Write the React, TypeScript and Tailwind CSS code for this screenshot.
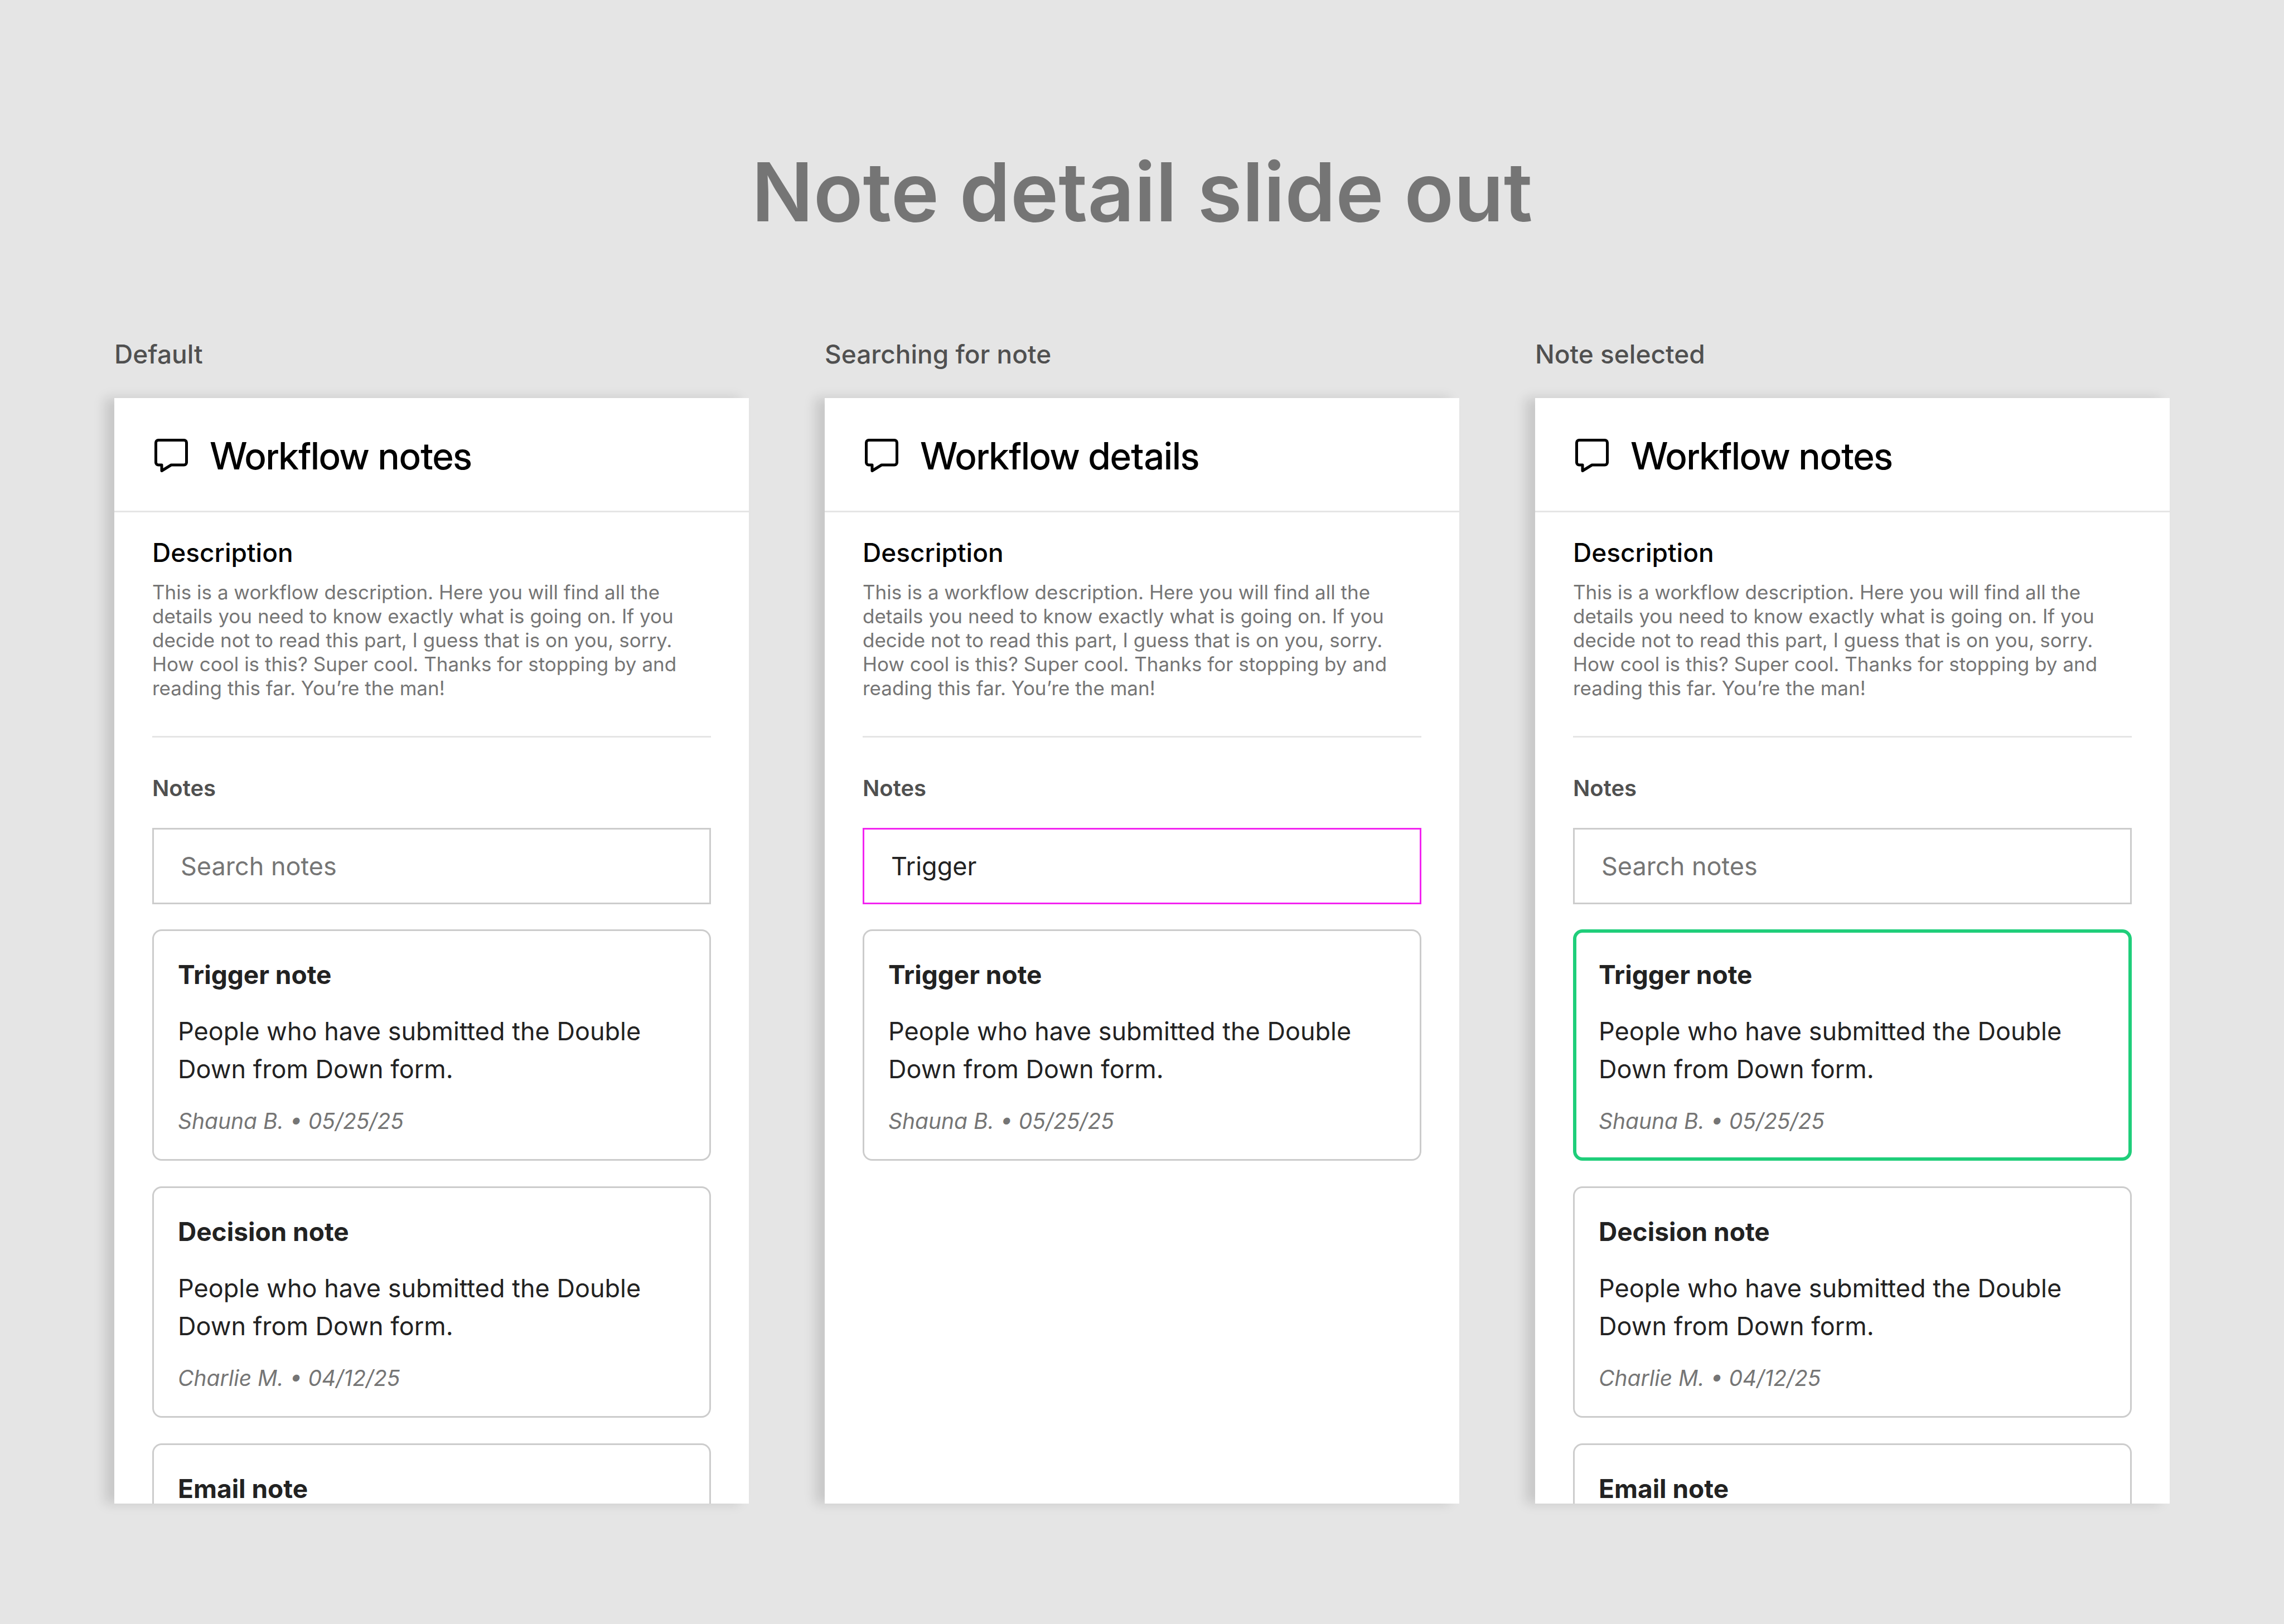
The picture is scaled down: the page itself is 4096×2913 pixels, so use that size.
import React, { useState } from 'react';

type Note = {
  title: string;
  body?: string;
  author?: string;
  date?: string;
};

type PanelProps = {
  id: string;
  label: string;
  heading: string;
  initialQuery?: string;
  selected?: string;
};

const notes: Note[] = [
  { title: 'Trigger note', body: 'People who have submitted the Double Down from Down form.', author: 'Shauna B.', date: '05/25/25' },
  { title: 'Decision note', body: 'People who have submitted the Double Down from Down form.', author: 'Charlie M.', date: '04/12/25' },
  { title: 'Email note' },
];

const NoteIcon = () => (
  <svg className="w-[60px] h-[60px] shrink-0" viewBox="0 0 24 24" fill="none" stroke="currentColor" strokeWidth="2" strokeLinecap="round" strokeLinejoin="round" aria-hidden="true">
    <path d="M2.8 1H21.2A1.8 1.8 0 0 1 23 2.8V17A1.8 1.8 0 0 1 21.2 18.8H12L5.2 23V18.8H2.8A1.8 1.8 0 0 1 1 17V2.8A1.8 1.8 0 0 1 2.8 1Z" />
  </svg>
);

const NoteCard = ({ note, selected }: { note: Note; selected: boolean }) => (
  <article
    className={
      selected
        ? 'rounded-[17px] px-[46px] pt-[47px] pb-[43px] ring-6 ring-inset ring-[#1fce7a]'
        : 'rounded-[17px] px-[46px] pt-[47px] pb-[43px] ring-3 ring-inset ring-[#cccccc]'
    }
  >
    <h4 className="text-[46px] leading-[68px] font-bold text-[#222222]">{note.title}</h4>
    {note.body && <p className="mt-[34px] text-[45px] leading-[68px] text-[#222222]">{note.body}</p>}
    {note.author && (
      <p className="mt-[30px] text-[39px] leading-[57px] italic text-[#757575]">
        {note.author} • {note.date}
      </p>
    )}
  </article>
);

const NotesPanel = ({ id, label, heading, initialQuery = '', selected }: PanelProps) => {
  const [query, setQuery] = useState(initialQuery);
  const visible = notes.filter((note) => note.title.toLowerCase().includes(query.toLowerCase()));

  return (
    <section className="flex flex-col min-h-0 min-w-0">
      <h2 className="mb-[45px] text-[46px] leading-[68px] font-medium text-[#505050]">{label}</h2>
      <div className="flex-1 min-h-0 overflow-hidden bg-white shadow-[-17px_0_20px_rgba(0,0,0,0.13)]">
        <header className="flex items-center gap-[40px] px-[72px] pt-[63px] pb-[59px] border-b-3 border-[#e5e5e5] text-black">
          <NoteIcon />
          <h3 className="font-['Inter_Display','Inter',sans-serif] text-[68px] leading-[80px] font-medium">{heading}</h3>
        </header>
        <div className="px-[68px]">
          <div className="pt-[38px] pb-[64px] border-b-3 border-[#e5e5e5]">
            <h4 className="text-[46px] leading-[68px] font-medium text-black">Description</h4>
            <p className="mt-[16px] text-[35px] leading-[43px] text-[#757575]">
              This is a workflow description. Here you will find all the details you need to know exactly what is
              going on. If you decide not to read this part, I guess that is on you, sorry. How cool is this? Super
              cool. Thanks for stopping by and reading this far. You’re the man!
            </p>
          </div>
          <label htmlFor={id} className="block mt-[62px] mb-[43px] text-[40px] leading-[57px] font-semibold text-[#505050]">
            Notes
          </label>
          <input
            id={id}
            type="text"
            value={query}
            placeholder="Search notes"
            onChange={(e) => setQuery(e.target.value)}
            className="block w-full h-[137px] px-[48px] border-3 border-[#cccccc] text-[45px] text-[#222222] placeholder:text-[#757575] outline-none not-placeholder-shown:border-[#f224f0]"
          />
          <div className="mt-[45px] flex flex-col gap-[46px]">
            {visible.map((note) => (
              <NoteCard key={note.title} note={note} selected={note.title === selected} />
            ))}
          </div>
        </div>
      </div>
    </section>
  );
};

const App = () => {
  return (
    <main className="flex flex-col h-screen px-[205px] pt-[254px] pb-[216px] bg-[#e5e5e5] font-['Inter',sans-serif]">
      <h1 className="mb-[167px] text-center text-[146px] leading-[180px] font-semibold text-[#757575]">
        Note detail slide out
      </h1>
      <div className="flex-1 min-h-0 grid grid-cols-3 gap-[136px]">
        <NotesPanel id="notes-default" label="Default" heading="Workflow notes" />
        <NotesPanel id="notes-search" label="Searching for note" heading="Workflow details" initialQuery="Trigger" />
        <NotesPanel id="notes-selected" label="Note selected" heading="Workflow notes" selected="Trigger note" />
      </div>
    </main>
  );
};

export default App;
